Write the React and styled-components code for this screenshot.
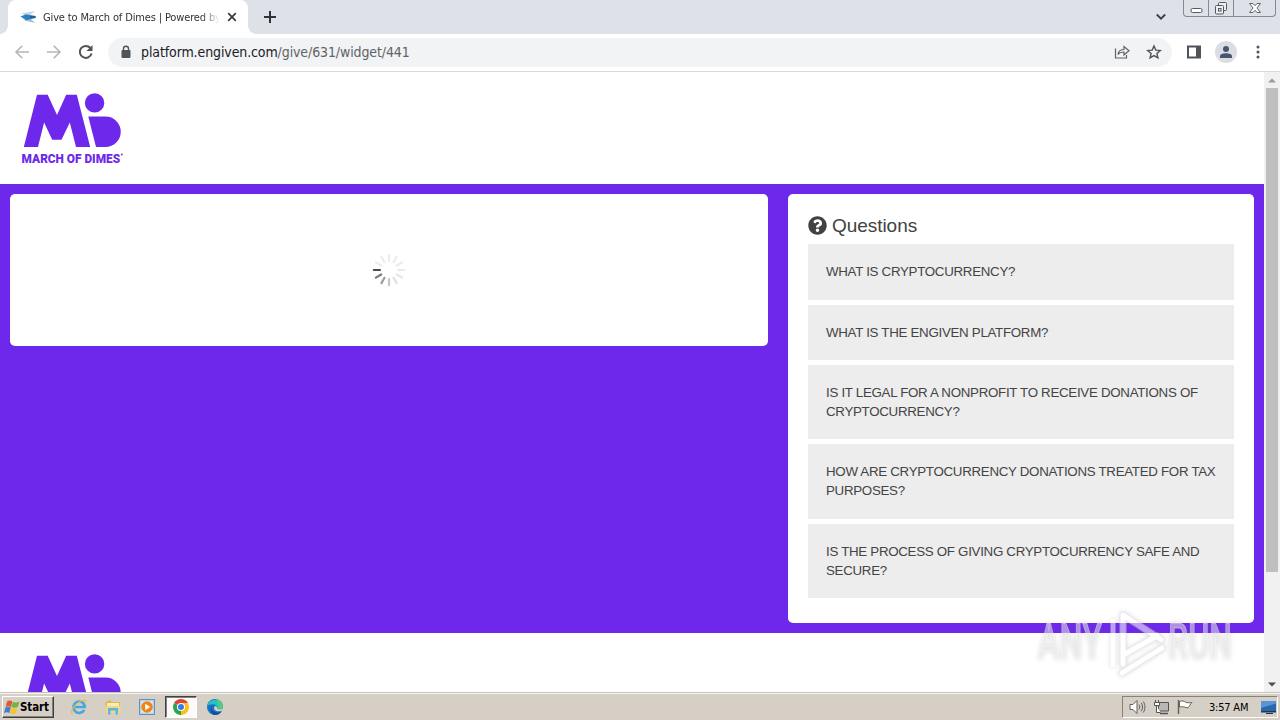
import * as React from 'react';
import styled, { createGlobalStyle } from 'styled-components';
import { FaQuestionCircle } from 'react-icons/fa';

const PURPLE = '#6e28ec';

const GlobalStyle = createGlobalStyle`
  * {
    box-sizing: border-box;
  }

  body {
    margin: 0;
    overflow: hidden;
    font-family: 'Liberation Sans', Arial, sans-serif;
  }

  svg {
    display: block;
    flex-shrink: 0;
  }
`;

const Screen = styled.div`
  position: relative;
  display: flex;
  flex-direction: column;
  width: 1280px;
  height: 720px;
  overflow: hidden;
  background-color: #fff;
`;

/* browser */

const TabStrip = styled.div`
  display: flex;
  flex-shrink: 0;
  height: 34px;
  padding-left: 8px;
  background-color: #dee1e8;
`;

const Tab = styled.div`
  position: relative;
  display: flex;
  align-items: center;
  width: 240px;
  padding: 0 10px 0 12px;
  border-radius: 8px 8px 0 0;
  background-color: #fff;

  &::before,
  &::after {
    content: '';
    position: absolute;
    bottom: 0;
    width: 8px;
    height: 8px;
  }

  &::before {
    left: -8px;
    background: radial-gradient(circle at 0 0, #dee1e8 7.5px, #fff 8px);
  }

  &::after {
    right: -8px;
    background: radial-gradient(circle at 100% 0, #dee1e8 7.5px, #fff 8px);
  }
`;

const TabTitle = styled.span`
  width: 175px;
  margin: 0 9px 0 7px;
  color: #303134;
  font-family: 'DejaVu Sans Condensed', 'DejaVu Sans', sans-serif;
  font-stretch: condensed;
  font-size: 11px;
  letter-spacing: -0.14px;
  white-space: nowrap;
  mask-image: linear-gradient(to right, #000 158px, transparent 177px);
`;

const NewTab = styled.div`
  padding: 11px 0 0 16px;
`;

const TabSearch = styled.div`
  margin-left: auto;
  padding: 13px 17px 0 0;
`;

const WindowButtons = styled.div`
  display: flex;
  width: 93px;
  height: 17px;
  margin-right: 4px;
  border: 1px solid #868990;
  border-top: 0;
  border-radius: 0 0 4px 4px;
`;

const WindowButton = styled.div`
  display: flex;
  justify-content: center;
  width: ${({ $width }) => $width}px;

  & + & {
    border-left: 1px solid #868990;
  }
`;

const Toolbar = styled.div`
  display: flex;
  align-items: center;
  flex-shrink: 0;
  height: 38px;
  padding: 0 14px 1px;
  border-bottom: 1px solid #d6d8db;
`;

const NavIcons = styled.div`
  display: flex;
  gap: 16px;
  width: 94px;
`;

const AddressBar = styled.div`
  display: flex;
  align-items: center;
  width: 1064px;
  height: 29px;
  padding: 0 10px 0 12px;
  border-radius: 15px;
  background-color: #f1f3f4;
`;

const Url = styled.span`
  flex: 1;
  padding-left: 9px;
  color: #5f6368;
  font-family: 'DejaVu Sans Condensed', 'DejaVu Sans', sans-serif;
  font-stretch: condensed;
  font-size: 14px;
  letter-spacing: -0.11px;
  white-space: nowrap;

  b {
    color: #202124;
    font-weight: 400;
  }
`;

const AddressActions = styled.div`
  display: flex;
  gap: 16px;
`;

const ToolbarActions = styled.div`
  display: flex;
  align-items: center;
  padding-left: 14px;
`;

const Avatar = styled.div`
  display: flex;
  justify-content: center;
  align-items: center;
  width: 22px;
  height: 22px;
  margin: 0 19px 0 13px;
  border-radius: 50%;
  background-color: #dadee3;
`;

/* page */

const Viewport = styled.div`
  display: flex;
  height: 620px;
  overflow: hidden;
`;

const Page = styled.main`
  width: 1264px;
`;

const Banner = styled.div`
  height: 112px;
  padding: 21px 0 0 21px;
  background-color: #fff;
`;

const Content = styled.div`
  display: flex;
  align-items: flex-start;
  gap: 20px;
  height: 449px;
  padding: 10px;
  background-color: ${PURPLE};
`;

const Card = styled.section`
  width: ${({ $width }) => $width}px;
  height: ${({ $height }) => $height}px;
  border-radius: 5px;
  background-color: #fff;
`;

const DonationCard = styled(Card)`
  display: flex;
  justify-content: center;
  align-items: center;
`;

const QuestionsCard = styled(Card)`
  padding: 20px;
`;

const Heading = styled.h2`
  display: flex;
  align-items: center;
  gap: 5px;
  height: 23px;
  margin: 0 0 7.2px;
  color: #424242;
  font-size: 19px;
  font-weight: 400;
  letter-spacing: -0.05px;
`;

const QuestionList = styled.div`
  display: flex;
  flex-direction: column;
  gap: 5px;
`;

const Question = styled.div`
  padding: 18px 18px 18.4px;
  background-color: #ededed;
  color: #444;
  font-size: 13.33px;
  line-height: 19px;
  letter-spacing: -0.3px;
  white-space: pre;
`;

const Scrollbar = styled.div`
  display: flex;
  flex-direction: column;
  align-items: center;
  width: 16px;
  background-color: #f1f1f1;
`;

const ScrollThumb = styled.div`
  width: 12px;
  height: 484px;
  margin-bottom: auto;
  background-color: #bfbfbf;
`;

const ScrollArrow = styled.div`
  display: flex;
  justify-content: center;
  align-items: center;
  width: 16px;
  height: 16px;
`;

const Watermark = styled.svg`
  position: absolute;
  left: 1030px;
  top: 602px;

  g {
    filter: drop-shadow(0 0 2px rgba(90, 90, 90, 0.4));
  }
`;

/* taskbar */

const Taskbar = styled.div`
  display: flex;
  align-items: center;
  height: 28px;
  padding: 1px 2px 0 2px;
  border-top: 1px solid #c8c4bc;
  background-color: #d5cfc6;
  box-shadow: inset 0 1px #f6f4f0;
`;

const StartButton = styled.div`
  display: flex;
  align-items: center;
  width: 52px;
  height: 22px;
  padding-left: 1px;
  border: 1px solid;
  border-color: #fff #404040 #404040 #fff;
  box-shadow: inset -1px -1px #85817b;
  color: #000;
  font-family: 'DejaVu Sans Condensed', 'DejaVu Sans', sans-serif;
  font-stretch: condensed;
  font-size: 11.5px;
  font-weight: 700;
  letter-spacing: -0.1px;
`;

const QuickLaunch = styled.div`
  display: flex;
  padding-left: 9px;
`;

const TaskItem = styled.div`
  display: flex;
  justify-content: center;
  align-items: center;
  width: 32px;
  height: 22px;
  margin-right: 2px;
  border: 1px solid transparent;
  ${({ $active }) =>
    $active &&
    `
    border-color: #404040 #fff #fff #404040;
    background-color: #fcfbfa;
    box-shadow: inset 1px 1px #85817b;
  `}
`;

const Tray = styled.div`
  display: flex;
  align-items: center;
  width: 156px;
  height: 22px;
  margin-left: auto;
  padding-left: 6px;
  border: 1px solid;
  border-color: #85817b #fff #fff #85817b;
`;

const Clock = styled.span`
  width: 42px;
  margin: 0 10px 0 15px;
  color: #000;
  font-family: 'DejaVu Sans Condensed', 'DejaVu Sans', sans-serif;
  font-stretch: condensed;
  font-size: 11px;
  letter-spacing: -0.2px;
  white-space: nowrap;
`;

const questions = [
  'WHAT IS CRYPTOCURRENCY?',
  'WHAT IS THE ENGIVEN PLATFORM?',
  'IS IT LEGAL FOR A NONPROFIT TO RECEIVE DONATIONS OF\nCRYPTOCURRENCY?',
  'HOW ARE CRYPTOCURRENCY DONATIONS TREATED FOR TAX\nPURPOSES?',
  'IS THE PROCESS OF GIVING CRYPTOCURRENCY SAFE AND\nSECURE?',
];

const spokes = [
  '#ececec', '#ececec', '#ebebeb', '#e9e9e9', '#e6e6e6', '#e0e0e0',
  '#c6c6c6', '#9c9c9c', '#7a7a7a', '#4c4c4c', '#ededed', '#ededed',
];

function Logo() {
  return (
    <svg width="104" height="72" viewBox="21 93 104 72" fill={PURPLE}>
      <path d="M37 94.8h10.7L57 115l9.2-20.2h10.6L90.2 147H76l-6.2-24.6-8.3 17.4h-9.3l-8.1-17.4L38 147H23.8z" />
      <circle cx="94.6" cy="102.9" r="9.7" />
      <path d="M88.3 116.5h17.2a15.25 15.25 0 0 1 0 30.5H96z" />
      <text
        x="21.6"
        y="163"
        fontFamily="Roboto, sans-serif"
        fontWeight="900"
        fontSize="13.2"
        textLength="98.5"
        lengthAdjust="spacingAndGlyphs"
      >
        MARCH OF DIMES
      </text>
      <circle cx="121.800" cy="154.500" r="0.9" />
    </svg>
  );
}

function Spinner() {
  return (
    <svg width="34" height="34" viewBox="-17 -17 34 34">
      {spokes.map((color, i) => (
        <line
          key={i}
          y1="-9"
          y2="-15.2"
          stroke={color}
          strokeWidth="2.2"
          strokeLinecap="round"
          transform={`rotate(${i * 30})`}
        />
      ))}
    </svg>
  );
}

function BrowserChrome() {
  return (
    <>
      <TabStrip>
        <Tab>
          <svg width="16" height="16" viewBox="0 0 16 16">
            <path d="M1 4.3 15 2l-4.5 4H5z" fill="#c9d9e4" />
            <path d="M5 10h6l4 4-10.500-2.500z" fill="#a9bdca" />
            <path d="M.5 7.500 6 5.200 15.500 7v2L6 11.200z" fill="#2583c6" />
            <path d="M10 7h5.500v2H10z" fill="#245f91" />
          </svg>
          <TabTitle>Give to March of Dimes | Powered by</TabTitle>
          <svg width="10" height="10" viewBox="0 0 10 10" stroke="#37393d" strokeWidth="1.7">
            <path d="m1.200 1.200 7.600 7.600M8.800 1.200 1.200 8.800" />
          </svg>
        </Tab>
        <NewTab>
          <svg width="12" height="12" viewBox="0 0 12 12" stroke="#303238" strokeWidth="2">
            <path d="M6 0v12M0 6h12" />
          </svg>
        </NewTab>
        <TabSearch>
          <svg width="10" height="8" viewBox="0 0 10 8" fill="none" stroke="#3b3e45" strokeWidth="1.8">
            <path d="m.8 1.500 4.200 4.200 4.200-4.200" />
          </svg>
        </TabSearch>
        <WindowButtons>
          <WindowButton $width={24}>
            <svg width="13" height="16" viewBox="0 0 13 16" fill="#fff" stroke="#555961">
              <rect x="1" y="8.500" width="11" height="4" rx="1.500" />
            </svg>
          </WindowButton>
          <WindowButton $width={25}>
            <svg width="14" height="16" viewBox="0 0 14 16" fill="#eceef2" stroke="#555961">
              <rect x="4.500" y="2.500" width="8" height="8" rx="1" />
              <rect x="1.500" y="5.500" width="8" height="8.500" rx="1" />
              <rect x="4.500" y="8.500" width="2.500" height="2.500" />
            </svg>
          </WindowButton>
          <WindowButton $width={42}>
            <svg width="14" height="16" viewBox="0 0 14 16" fill="#fff" stroke="#60646c">
              <path d="M1.500 3.500H5l2 2.200 2-2.200h3.500L9 8l3.500 4.500H9l-2-2.200-2 2.200H1.500L5 8z" />
            </svg>
          </WindowButton>
        </WindowButtons>
      </TabStrip>

      <Toolbar>
        <NavIcons>
          <svg width="16" height="16" viewBox="0 0 16 16" fill="none" stroke="#b4b6b9" strokeWidth="1.600">
            <path d="M15 8H2M8.300 1.700 2 8l6.300 6.300" />
          </svg>
          <svg width="16" height="16" viewBox="0 0 16 16" fill="none" stroke="#b4b6b9" strokeWidth="1.600">
            <path d="M1 8h13M7.700 1.700 14 8l-6.300 6.300" />
          </svg>
          <svg width="16" height="16" viewBox="0 0 16 16" fill="none" stroke="#505357" strokeWidth="2">
            <path d="M13.600 9.500A6 6 0 1 1 12.400 4" />
            <path d="M14.500 1v6h-6z" fill="#505357" stroke="none" />
          </svg>
        </NavIcons>
        <AddressBar>
          <svg width="12" height="14" viewBox="0 0 12 14">
            <rect x="1.500" y="5" width="9" height="8" rx="1" fill="#505357" />
            <path d="M3.500 5.500V3.700a2.500 2.500 0 0 1 5 0v1.800" fill="none" stroke="#505357" strokeWidth="1.400" />
          </svg>
          <Url>
            <b>platform.engiven.com</b>/give/631/widget/441
          </Url>
          <AddressActions>
            <svg width="16" height="16" viewBox="0 0 16 16" fill="none" stroke="#5f6368" strokeWidth="1.200">
              <path d="M1.500 4.500v9.500h11v-3" />
              <path d="M4 10.500c.5-3.500 2.500-5 6-5V2.500l5 4.200-5 4.200V8c-2.500 0-4.500.5-6 2.500z" />
            </svg>
            <svg width="16" height="16" viewBox="0 0 16 16" fill="none" stroke="#505357" strokeWidth="1.400">
              <path d="m8 2 1.800 4.100 4.500.4-3.400 3 1 4.400L8 11.600l-3.900 2.300 1-4.400-3.400-3 4.500-.4z" />
            </svg>
          </AddressActions>
        </AddressBar>
        <ToolbarActions>
          <svg width="16" height="16" viewBox="0 0 16 16">
            <path d="M1 1.500h14v13H1z" fill="#505357" />
            <path d="M3 3.500h7v9H3z" fill="#fff" />
          </svg>
          <Avatar>
            <svg width="14" height="14" viewBox="0 0 14 14" fill="#4a5470">
              <circle cx="7" cy="4" r="3" />
              <path d="M1 13v-1.800C1 9 4.500 8.200 7 8.200s6 .8 6 3V13z" />
            </svg>
          </Avatar>
          <svg width="4" height="14" viewBox="0 0 4 14" fill="#505357">
            <circle cx="2" cy="2" r="1.500" />
            <circle cx="2" cy="7" r="1.500" />
            <circle cx="2" cy="12" r="1.500" />
          </svg>
        </ToolbarActions>
      </Toolbar>
    </>
  );
}

function WindowsFlag() {
  return (
    <svg width="16" height="16" viewBox="0 0 16 16">
      <path d="M3.200 2.200c2-1.300 3.500-.9 5.200.2L7 8c-1.700-1-3.300-1.100-5.300 0z" fill="#e4572e" />
      <path d="M8.900 2.700c2 .9 3.800 1 6.600-.2L13.700 8.100c-2.200 1-4.200.9-6.200 0z" fill="#72b53c" />
      <path d="M1.500 8.500c2-1 3.600-.9 5.300.1l-1.500 5.400c-1.600-.9-3.200-1-5.300 0z" fill="#3f7fd1" />
      <path d="M7.300 8.800c2 1 3.900 1.100 6.200.1l-1.700 5.500c-2.200 1-4 .8-6-.1z" fill="#f7c331" />
    </svg>
  );
}

function TaskbarIcons() {
  return (
    <QuickLaunch>
      <TaskItem>
        <svg width="18" height="18" viewBox="0 0 18 18" fill="none">
          <path d="M14.200 11.800A5.700 5.700 0 1 1 14.800 9H5" stroke="#45a8e3" strokeWidth="2.600" />
          <path d="M2.500 16C-.5 13.500 5 6 11 3c3-1.500 5.500-1.300 5 1.300" stroke="#e8bd48" strokeWidth="1.300" />
        </svg>
      </TaskItem>
      <TaskItem>
        <svg width="18" height="18" viewBox="0 0 18 18">
          <path d="M1.500 4 6 2l2 2h8v11h-14.500z" fill="#dcb957" />
          <path d="M3 5h12v6H3z" fill="#f9edb0" />
          <path d="M1.500 8h15v7h-15z" fill="#edd98c" />
          <path d="M4 16.500V10h10v6.500h-2.500V12.500h-5v4z" fill="#62b4df" />
        </svg>
      </TaskItem>
      <TaskItem>
        <svg width="18" height="18" viewBox="0 0 18 18">
          <rect x="1.500" y="1.500" width="15" height="15" fill="#b7d4ec" stroke="#6391bd" />
          <rect x="3.500" y="3.500" width="11" height="11" fill="#e6f0f8" />
          <circle cx="9" cy="9" r="5.800" fill="#ee8617" />
          <path d="m7.200 5.800 5 3.200-5 3.200z" fill="#fff" />
        </svg>
      </TaskItem>
      <TaskItem $active>
        <svg width="16" height="16" viewBox="0 0 16 16">
          <path d="M8 8 1.100 4A8 8 0 0 1 14.900 4z" fill="#e34133" />
          <path d="M8 8 14.900 4A8 8 0 0 1 8 16z" fill="#fbc116" />
          <path d="M8 8v8A8 8 0 0 1 1.100 4z" fill="#2da44e" />
          <path d="M8 4h6.900L12 10 8 16l3.500-6z" fill="#fbc116" />
          <circle cx="8" cy="8" r="4" fill="#fff" />
          <circle cx="8" cy="8" r="3" fill="#327de9" />
        </svg>
      </TaskItem>
      <TaskItem>
        <svg width="18" height="18" viewBox="0 0 18 18">
          <circle cx="9" cy="9" r="8" fill="#1574c7" />
          <path d="M1.200 8A8 8 0 0 1 17 9c0 3-4.500 4.500-6.500 2.500C12 9 10 6.200 7 6.200 4.500 6.200 2.500 7 1.200 8z" fill="#2bbfc0" />
          <path d="M10 1.200c4 .3 7 3.500 7 7.300 0 2.500-3 3.700-5.500 3C14 9 12.500 4 10 1.200z" fill="#58cc75" />
          <path d="M7 7.500c-3 3-.5 7 5 7 1.500 0 3-.5 3.800-1.200A8 8 0 0 1 9 17C4.500 16 3 9.500 7 7.500z" fill="#12509e" />
          <path d="M9 8c-1.800 1.500-1 5 2.500 5.300 2.200.2 4.500-.3 5.700-1.300l1-2.500c-2 2.300-5.200 2.300-7.200 1C11.500 9.500 10.500 8.300 9 8z" fill="#d5cfc6" />
        </svg>
      </TaskItem>
    </QuickLaunch>
  );
}

function SystemTray() {
  return (
    <Tray>
      <svg width="17" height="16" viewBox="0 0 17 16" fill="none" stroke="#5f5e5b">
        <path d="M1 5.500h3L8 1.500v13l-4-4H1z" fill="#fff" />
        <path d="M10 5.500c1 1.500 1 3.500 0 5M12.200 3.800c1.800 2.500 1.800 6 0 8.400M14.300 2.500c2.200 3.500 2.200 7.500 0 11" />
      </svg>
      <svg width="24" height="16" viewBox="-7 0 24 16" fill="#fff" stroke="#55534f">
        <path d="M5.500 3.500h10v8.500h-10z" fill="#b9b7b3" />
        <path d="M7 14.500h8" strokeWidth="1.500" />
        <path d="M1.500 3.500h5v3h-5zM2.500 1v2.500M5.500 1v2.500M3.500 6.500v7h4" />
      </svg>
      <svg width="24" height="16" viewBox="-7 0 24 16" fill="#fff" stroke="#66645f">
        <path d="M2.500 2.500c2.500-1 4.500-.5 6 .7 2 .8 4 .6 6.500.3-2 1.500-2.500 4-4 5.300-2.500 0-5-1.800-8.500-.8z" />
        <path d="M1.500 1v14" strokeWidth="1.500" />
      </svg>
      <Clock>3:57 AM</Clock>
      <svg width="17" height="15" viewBox="0 0 17 15">
        <path d="M1 1h15v10H1z" fill="#2967b0" />
        <path d="M1 1h15v2.500L1 8z" fill="#5795d6" />
        <path d="M1 11h15v1.500H1zM6 13h7v1H6z" fill="#26364a" />
      </svg>
    </Tray>
  );
}

function AnyRunMark() {
  const text = {
    y: 57,
    fontFamily: 'Roboto, sans-serif',
    fontSize: 50,
    fontWeight: 500,
    lengthAdjust: 'spacingAndGlyphs',
    fill: '#f4f4f4',
    fillOpacity: 0.5,
    stroke: '#fff',
    strokeOpacity: 0.4,
    strokeWidth: 1,
  };

  return (
    <Watermark width="210" height="84" viewBox="0 0 210 84">
      <g>
        <text x="8" textLength="64" {...text}>
          ANY
        </text>
        <text x="138" textLength="64" {...text}>
          RUN
        </text>
      </g>
      <g fill="none" strokeLinejoin="round" strokeLinecap="round" opacity="0.55">
        <path d="M83 19v44" stroke="#fff" strokeWidth="5" />
        <path d="M93 62V13l38 24.500M95 52l32-18M92 71l40-25" stroke="#d8d8d8" strokeWidth="7" />
        <path d="M93 62V13l38 24.500M95 52l32-18M92 71l40-25" stroke="#fff" strokeWidth="5" />
      </g>
    </Watermark>
  );
}

export default function App() {
  return (
    <Screen>
      <GlobalStyle />
      <BrowserChrome />

      <Viewport>
        <Page>
          <Banner>
            <Logo />
          </Banner>
          <Content>
            <DonationCard $width={758} $height={152}>
              <Spinner />
            </DonationCard>
            <QuestionsCard $width={466} $height={429}>
              <Heading>
                <FaQuestionCircle size={19} />
                Questions
              </Heading>
              <QuestionList>
                {questions.map((question) => (
                  <Question key={question}>{question}</Question>
                ))}
              </QuestionList>
            </QuestionsCard>
          </Content>
          <Banner>
            <Logo />
          </Banner>
        </Page>
        <Scrollbar>
          <ScrollArrow>
            <svg width="8" height="5" viewBox="0 0 8 5" fill="#9b9b9b">
              <path d="m0 4.500 4-4 4 4z" />
            </svg>
          </ScrollArrow>
          <ScrollThumb />
          <ScrollArrow>
            <svg width="8" height="5" viewBox="0 0 8 5" fill="#4c4c4c">
              <path d="m0 .5 4 4 4-4z" />
            </svg>
          </ScrollArrow>
        </Scrollbar>
      </Viewport>

      <Taskbar>
        <StartButton>
          <WindowsFlag />
          Start
        </StartButton>
        <TaskbarIcons />
        <SystemTray />
      </Taskbar>

      <AnyRunMark />
    </Screen>
  );
}
